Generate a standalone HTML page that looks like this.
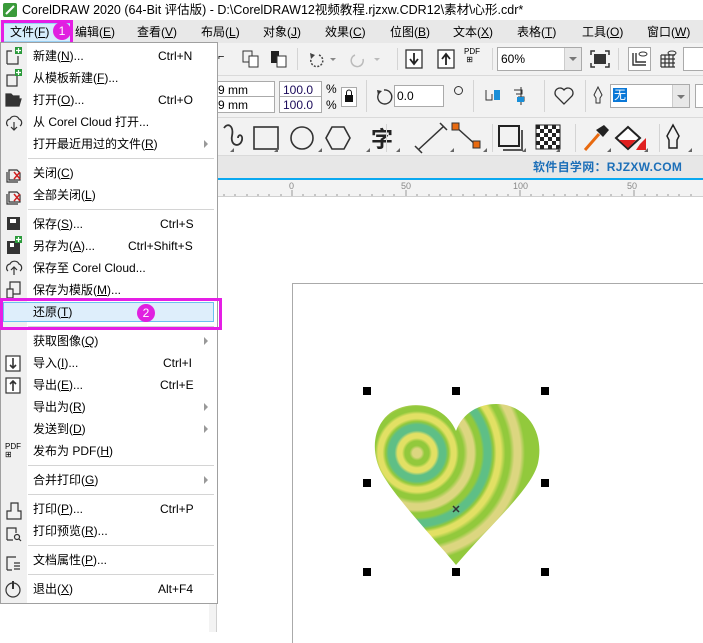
<!DOCTYPE html>
<html><head><meta charset="utf-8"><style>
*{margin:0;padding:0;box-sizing:border-box}
body{width:703px;height:632px;overflow:hidden;background:#fff;position:relative;font-family:"Liberation Sans","Noto Sans CJK SC",sans-serif;font-size:12px;color:#000}
.a{position:absolute}
.t{position:absolute;white-space:nowrap;font-size:12px;line-height:14px}
.mi{position:absolute;left:33px;font-size:12px;line-height:14px;white-space:nowrap}
.sc{position:absolute;font-size:12px;line-height:14px;white-space:nowrap}
.sep{position:absolute;left:28px;width:186px;height:1px;background:#d4d4d4}
.arr{position:absolute;left:204px;width:0;height:0;border-left:4px solid #999;border-top:4px solid transparent;border-bottom:4px solid transparent}
.box{position:absolute;background:#fff;border:1px solid #aaa;font-size:12px;line-height:14px;padding:1px 3px;color:#000}
.vd{position:absolute;width:1px;background:#d4d4d4}
</style></head><body>
<div class="a" style="left:0;top:0;width:703px;height:20px;background:#fff"></div>
<svg class="a" style="left:3px;top:3px" width="14" height="14"><rect width="14" height="14" rx="2" fill="#3a9a3a"/><path d="M3 11 L11 3" stroke="#fff" stroke-width="2"/></svg>
<div class="t" style="left:22px;top:3px;font-size:12.5px">CorelDRAW 2020 (64-Bit 评估版) - D:\CorelDRAW12视频教程.rjzxw.CDR12\素材\心形.cdr*</div>
<div class="a" style="left:0;top:20px;width:703px;height:23px;background:#e8e8e8"></div>
<div class="a" style="left:3px;top:23px;width:68px;height:19px;background:#d6ecfb;border:1px solid #99d1f5"></div>
<div class="t" style="left:10px;top:25px">文件(<u>F</u>)</div>
<div class="t" style="left:75px;top:25px">编辑(<u>E</u>)</div>
<div class="t" style="left:137px;top:25px">查看(<u>V</u>)</div>
<div class="t" style="left:201px;top:25px">布局(<u>L</u>)</div>
<div class="t" style="left:263px;top:25px">对象(<u>J</u>)</div>
<div class="t" style="left:325px;top:25px">效果(<u>C</u>)</div>
<div class="t" style="left:390px;top:25px">位图(<u>B</u>)</div>
<div class="t" style="left:453px;top:25px">文本(<u>X</u>)</div>
<div class="t" style="left:517px;top:25px">表格(<u>T</u>)</div>
<div class="t" style="left:582px;top:25px">工具(<u>O</u>)</div>
<div class="t" style="left:647px;top:25px">窗口(<u>W</u>)</div>
<div class="a" style="left:1px;top:20px;width:72px;height:25px;border:3px solid #e51ee5"></div>
<div class="a" style="left:53px;top:22px;width:18px;height:18px;border-radius:50%;background:#e020e0;color:#fff;font-size:12px;line-height:18px;text-align:center">1</div>

<div class="a" style="left:0;top:43px;width:703px;height:112px;background:#f2f2f2"></div>
<div class="a" style="left:0;top:75px;width:703px;height:1px;background:#dadada"></div>
<div class="a" style="left:0;top:117px;width:703px;height:1px;background:#dadada"></div>
<div class="a" style="left:0;top:155px;width:703px;height:1px;background:#dadada"></div>
<div class="t" style="left:218px;top:50px;font-size:11px">⌐</div>
<svg class="a" style="left:242px;top:50px" width="18" height="18"><rect x="1" y="1" width="9" height="11" fill="none" stroke="#333"/><rect x="7" y="6" width="9" height="11" fill="#fff" stroke="#333"/></svg>
<svg class="a" style="left:270px;top:50px" width="18" height="18"><rect x="1" y="1" width="8" height="12" fill="#222"/><rect x="7" y="6" width="9" height="11" fill="#fff" stroke="#333"/></svg>
<div class="vd" style="left:297px;top:48px;height:22px"></div>
<svg class="a" style="left:306px;top:50px" width="32" height="18"><path d="M13 5 A6 6 0 1 1 5 9" fill="none" stroke="#444" stroke-width="1.5" stroke-dasharray="2 1.5"/><path d="M4 3 L9 5 L5 9Z" fill="#444"/><path d="M24 8 L30 8 L27 11Z" fill="#888"/></svg>
<svg class="a" style="left:350px;top:50px" width="32" height="18"><path d="M5 5 A6 6 0 1 0 13 9" fill="none" stroke="#bbb" stroke-width="1.5"/><path d="M24 8 L30 8 L27 11Z" fill="#bbb"/></svg>
<div class="vd" style="left:397px;top:48px;height:22px"></div>
<svg class="a" style="left:404px;top:48px" width="70" height="22"><rect x="2" y="2" width="16" height="18" fill="#fff" stroke="#333" stroke-width="1.3"/><path d="M10 5 V15 M6 11 L10 16 L14 11" stroke="#222" stroke-width="1.8" fill="none"/><rect x="34" y="2" width="16" height="18" fill="#fff" stroke="#333" stroke-width="1.3"/><path d="M42 17 V7 M38 11 L42 6 L46 11" stroke="#222" stroke-width="1.8" fill="none"/></svg>
<div class="t" style="left:464px;top:48px;font-size:8px;line-height:8px">PDF<br>&nbsp;⊞</div>
<div class="vd" style="left:492px;top:48px;height:22px"></div>
<div class="box" style="left:497px;top:47px;width:85px;height:24px;padding:4px 3px">60%</div>
<div class="a" style="left:564px;top:48px;width:17px;height:22px;background:#e8e8e8;border-left:1px solid #ccc"></div>
<div class="a" style="left:569px;top:57px;border-left:4px solid transparent;border-right:4px solid transparent;border-top:4px solid #777"></div>
<svg class="a" style="left:590px;top:50px" width="20" height="18"><path d="M1 5V1H5 M15 1H19V5 M19 13V17H15 M5 17H1V13" stroke="#333" fill="none" stroke-width="1.5"/><rect x="4" y="4" width="12" height="10" fill="#333"/></svg>
<div class="vd" style="left:618px;top:48px;height:22px"></div>
<div class="a" style="left:628px;top:47px;width:23px;height:24px;border:1px solid #aaa;background:#fff"></div>
<svg class="a" style="left:630px;top:49px" width="20" height="20"><path d="M3 4V16H16 M6 4V13H16" stroke="#333" fill="none" stroke-width="1.4"/><ellipse cx="13" cy="5" rx="4" ry="2" fill="none" stroke="#333"/></svg>
<svg class="a" style="left:658px;top:49px" width="20" height="20"><path d="M3 6H17M3 10H17M3 14H17M3 18H17M3 6V18M7 6V18M11 6V18M15 6V18" stroke="#333" stroke-width="1.2"/><ellipse cx="14" cy="4" rx="4" ry="2" fill="none" stroke="#333"/></svg>
<div class="a" style="left:683px;top:47px;width:22px;height:24px;border:1px solid #aaa;background:#fff"></div>
<div class="box" style="left:214px;top:81px;width:61px;height:17px">9 mm</div>
<div class="box" style="left:214px;top:96px;width:61px;height:17px">9 mm</div>
<div class="box" style="left:279px;top:81px;width:43px;height:17px;color:#1a0a5a">100.0</div>
<div class="box" style="left:279px;top:96px;width:43px;height:17px;color:#1a0a5a">100.0</div>
<div class="t" style="left:326px;top:82px">%</div>
<div class="t" style="left:326px;top:98px">%</div>
<div class="a" style="left:341px;top:87px;width:16px;height:20px;border:1px solid #aaa;background:#fff"></div>
<svg class="a" style="left:344px;top:89px" width="10" height="14"><path d="M2.5 6V3.5A2.5 2.5 0 0 1 7.5 3.5V6" stroke="#111" fill="none"/><rect x="1" y="6" width="8" height="7" fill="#111"/></svg>
<div class="vd" style="left:366px;top:80px;height:32px"></div>
<svg class="a" style="left:374px;top:87px" width="20" height="20"><path d="M5 6 A7 7 0 1 0 10 3" fill="none" stroke="#333" stroke-width="1.4"/><path d="M3 3 L8 4 L4 8Z" fill="#333"/></svg>
<div class="box" style="left:394px;top:85px;width:50px;height:22px;padding:3px 2px">0.0</div>
<div class="a" style="left:454px;top:86px;width:9px;height:9px;border:1.2px solid #333;border-radius:50%"></div>
<div class="vd" style="left:473px;top:80px;height:32px"></div>
<svg class="a" style="left:484px;top:86px" width="60" height="20"><path d="M2 4V14H8V8" stroke="#333" fill="none"/><rect x="10" y="4" width="6" height="10" fill="#1a8fd8"/><path d="M37 1V19M30 4H38V8H32M34 11H40V15H33" stroke="#333" fill="none"/><rect x="33" y="11" width="7" height="5" fill="#1a8fd8"/></svg>
<div class="vd" style="left:544px;top:80px;height:32px"></div>
<svg class="a" style="left:553px;top:86px" width="22" height="20"><path d="M11 18 L3 10 A4.5 4.5 0 0 1 11 4 A4.5 4.5 0 0 1 19 10Z" fill="none" stroke="#333" stroke-width="1.3"/></svg>
<div class="vd" style="left:585px;top:80px;height:32px"></div>
<svg class="a" style="left:592px;top:86px" width="12" height="20"><path d="M6 1 L10 9 L8 12V17H4V12L2 9Z" fill="none" stroke="#333"/></svg>
<div class="box" style="left:610px;top:84px;width:80px;height:24px;padding:3px 2px"><span style="background:#0a78d7;color:#fff;padding:0 1px">无</span></div>
<div class="a" style="left:672px;top:85px;width:17px;height:22px;background:#e8e8e8;border-left:1px solid #ccc"></div>
<div class="a" style="left:677px;top:95px;border-left:4px solid transparent;border-right:4px solid transparent;border-top:4px solid #777"></div>
<div class="box" style="left:695px;top:84px;width:12px;height:24px"></div>
<svg class="a" style="left:218px;top:122px" width="480" height="32">
<path d="M6 6 C10 0 16 4 14 14 C12 24 22 26 24 18 C25 12 20 12 20 16" fill="none" stroke="#333" stroke-width="1.8"/>
<rect x="36" y="5" width="24" height="22" fill="none" stroke="#333" stroke-width="1.6"/>
<circle cx="84" cy="16" r="11" fill="none" stroke="#333" stroke-width="1.6"/>
<path d="M114 5 H126 L132 16 L126 27 H114 L108 16Z" fill="none" stroke="#333" stroke-width="1.6"/>
<text x="153" y="25" font-size="22" font-weight="bold" font-family="Noto Sans CJK SC" fill="#222">字</text>
<path d="M200 28 L226 4 M197 24 L204 31 M222 1 L229 8" stroke="#333" stroke-width="1.5"/>
<path d="M238 5 L258 23" stroke="#333" stroke-width="1.5"/><rect x="234" y="1" width="7" height="7" fill="#e86a10" stroke="#333"/><rect x="255" y="19" width="7" height="7" fill="#e86a10" stroke="#333"/>
<rect x="281" y="4" width="20" height="20" fill="none" stroke="#222" stroke-width="2"/><path d="M304 8V28H285" stroke="#555" stroke-width="2" fill="none"/>
<g fill="#222"><rect x="318" y="3" width="24" height="24" fill="#fff" stroke="#222"/>
<rect x="318" y="3" width="4" height="4"/><rect x="326" y="3" width="4" height="4"/><rect x="334" y="3" width="4" height="4"/><rect x="322" y="7" width="4" height="4"/><rect x="330" y="7" width="4" height="4"/><rect x="338" y="7" width="4" height="4"/><rect x="318" y="11" width="4" height="4"/><rect x="326" y="11" width="4" height="4"/><rect x="334" y="11" width="4" height="4"/><rect x="322" y="15" width="4" height="4"/><rect x="330" y="15" width="4" height="4"/><rect x="338" y="15" width="4" height="4"/><rect x="318" y="19" width="4" height="4"/><rect x="326" y="19" width="4" height="4"/><rect x="334" y="19" width="4" height="4"/><rect x="322" y="23" width="4" height="4"/><rect x="330" y="23" width="4" height="4"/><rect x="338" y="23" width="4" height="4"/></g>
<path d="M367 28 L381 12" stroke="#e86a10" stroke-width="3"/><path d="M378 8 L386 3 L391 8 L385 15Z" fill="#222"/>
<path d="M410 5 L422 16 L410 27 L398 16Z" fill="#fff" stroke="#222" stroke-width="2"/><path d="M401 18 L418 18 L410 26Z" fill="#e02020"/><path d="M422 22 L428 16 V28 H418Z" fill="#e02020"/>
<path d="M455 3 L461 14 L459 18 V26 H451 V18 L449 14Z" fill="none" stroke="#222" stroke-width="1.5"/>
<path d="M12 30 l4 0 0 -4z M56 30 l4 0 0-4z M100 30 l4 0 0-4z M148 30 l4 0 0-4z M178 30 l4 0 0-4z M232 30 l4 0 0-4z M265 30 l4 0 0-4z M304 30 l4 0 0-4z M338 30 l4 0 0-4z M389 30 l4 0 0-4z M426 30 l4 0 0-4z M470 30 l4 0 0-4z" fill="#666"/>
<path d="M168.5 2V30 M274.5 2V30 M357.5 2V30 M441.5 2V30" stroke="#d4d4d4"/>
</svg>
<div class="a" style="left:0;top:156px;width:703px;height:22px;background:#e7e7e7"></div>
<div class="t" style="left:533px;top:160px;font-size:12px;font-weight:bold;color:#1c6fb8;letter-spacing:0.3px">软件自学网：RJZXW.COM</div>
<div class="a" style="left:0;top:178px;width:703px;height:2px;background:#0aa8f0"></div>
<div class="a" style="left:0;top:180px;width:703px;height:17px;background:#f3f3f3;border-bottom:1px solid #d0d0d0"></div>
<svg class="a" style="left:218px;top:180px" width="485" height="17">
<g fill="#888" font-size="9" font-family="Liberation Sans"><text x="71" y="9">0</text><text x="183" y="9">50</text><text x="295" y="9">100</text><text x="409" y="9">50</text></g>
<path d="M74 10V16 M188 10V16 M302 10V16 M416 10V16" stroke="#999"/>
<path d="M6 14V16M17 14V16M29 14V16M40 14V16M51 14V16M63 14V16M85 14V16M97 14V16M108 14V16M119 14V16M131 14V16M142 14V16M154 14V16M165 14V16M176 14V16M199 14V16M211 14V16M222 14V16M233 14V16M245 14V16M256 14V16M268 14V16M279 14V16M290 14V16M313 14V16M325 14V16M336 14V16M347 14V16M359 14V16M370 14V16M382 14V16M393 14V16M404 14V16M427 14V16M439 14V16M450 14V16M461 14V16M473 14V16" stroke="#999"/>
</svg>
<div class="a" style="left:209px;top:197px;width:8px;height:435px;background:#f3f3f3;border-right:1px solid #d0d0d0"></div>
<div class="a" style="left:292px;top:283px;width:420px;height:360px;border-left:1px solid #aaa;border-top:1px solid #aaa"></div>
<svg class="a" style="left:360px;top:385px" width="195" height="195">
<defs>
<radialGradient id="rg" gradientUnits="userSpaceOnUse" cx="57" cy="68" r="150">
<stop offset="0" stop-color="#dcd680"/><stop offset="0.03" stop-color="#dcd680"/>
<stop offset="0.05" stop-color="#92c93c"/><stop offset="0.08" stop-color="#92c93c"/>
<stop offset="0.1" stop-color="#e2e064"/><stop offset="0.13" stop-color="#e2e064"/>
<stop offset="0.15" stop-color="#5ebf86"/><stop offset="0.19" stop-color="#5ebf86"/>
<stop offset="0.21" stop-color="#92c93c"/><stop offset="0.23" stop-color="#e2e064"/><stop offset="0.26" stop-color="#e2e064"/>
<stop offset="0.28" stop-color="#92c93c"/><stop offset="0.31" stop-color="#92c93c"/>
<stop offset="0.34" stop-color="#dcd680"/><stop offset="0.38" stop-color="#dcd680"/>
<stop offset="0.4" stop-color="#92c93c"/><stop offset="0.43" stop-color="#92c93c"/>
<stop offset="0.45" stop-color="#5ebf86"/><stop offset="0.49" stop-color="#5ebf86"/>
<stop offset="0.51" stop-color="#92c93c"/><stop offset="0.53" stop-color="#e2e064"/><stop offset="0.56" stop-color="#e2e064"/>
<stop offset="0.59" stop-color="#92c93c"/><stop offset="0.62" stop-color="#92c93c"/>
<stop offset="0.65" stop-color="#dcd680"/><stop offset="0.69" stop-color="#dcd680"/>
<stop offset="0.72" stop-color="#92c93c"/><stop offset="1" stop-color="#92c93c"/>
</radialGradient></defs>
<path d="M96 180 C80 160 40 118 24 92 C10 70 12 42 30 28 C50 14 84 18 96 46 C104 24 126 16 146 20 C170 26 184 50 178 78 C172 104 130 140 96 180Z" fill="url(#rg)"/>
<path d="M93 121 L99 127 M99 121 L93 127" stroke="#333" stroke-width="1.5"/>
</svg>
<div class="a" style="left:363px;top:387px;width:8px;height:8px;background:#000"></div>
<div class="a" style="left:452px;top:387px;width:8px;height:8px;background:#000"></div>
<div class="a" style="left:541px;top:387px;width:8px;height:8px;background:#000"></div>
<div class="a" style="left:363px;top:479px;width:8px;height:8px;background:#000"></div>
<div class="a" style="left:541px;top:479px;width:8px;height:8px;background:#000"></div>
<div class="a" style="left:363px;top:568px;width:8px;height:8px;background:#000"></div>
<div class="a" style="left:452px;top:568px;width:8px;height:8px;background:#000"></div>
<div class="a" style="left:541px;top:568px;width:8px;height:8px;background:#000"></div>

<div class="a" style="left:0;top:42px;width:218px;height:562px;background:#fff;border:1px solid #a0a0a0"></div>
<div class="a" style="left:1px;top:43px;width:26px;height:560px;background:#f0f0f0"></div>
<svg class="a" style="left:4px;top:46px" width="22" height="560" fill="none" stroke="#333" stroke-width="1.2">
<path d="M3 18V5H8 M3 18H14V10"/><rect x="11" y="1" width="7" height="7" fill="#2a9a3a" stroke="none"/><path d="M14.5 2V7M12 4.5H17" stroke="#fff"/>
<rect x="3" y="29" width="10" height="11" /><rect x="11" y="23" width="7" height="7" fill="#2a9a3a" stroke="none"/><path d="M14.5 24V29M12 26.5H17" stroke="#fff"/>
<path d="M2 60V48H7L9 50H15V60Z M4 60L6 53H17L15 60" fill="#333"/>
<path d="M4 80A4 4 0 0 1 6 73A5 5 0 0 1 15 73A4 4 0 0 1 16 80 M10 76V84M7 81L10 84L13 81"/>
<path d="M5 134V124H13L16 127V134Z M3 126V136H14" /><path d="M10 126L16 133M16 126L10 133" stroke="#d02020" stroke-width="1.5"/>
<path d="M5 156V146H13L16 149V156Z M3 148V158H14"/><path d="M10 148L16 155M16 148L10 155" stroke="#d02020" stroke-width="1.5"/>
<rect x="3" y="171" width="13" height="13" fill="#333" stroke="none"/><rect x="6" y="173" width="6" height="4" fill="#fff" stroke="none"/>
<rect x="3" y="195" width="13" height="13" fill="#333" stroke="none"/><rect x="6" y="197" width="4" height="4" fill="#fff" stroke="none"/><rect x="11" y="190" width="7" height="7" fill="#2a9a3a" stroke="none"/><path d="M14.5 191V196M12 193.5H17" stroke="#fff"/>
<path d="M4 225A4 4 0 0 1 6 218A5 5 0 0 1 15 218A4 4 0 0 1 16 225 M10 229V221M7 224L10 221L13 224"/>
<path d="M3 252V243H9V252Z M6 243V236H16V248H9"/>
<rect x="3" y="268" width="8" height="7" fill="#333" stroke="none"/><path d="M12 263A3 3 0 1 1 15 266" stroke="#e03030"/>
<rect x="2" y="310" width="14" height="15" fill="#fff"/><path d="M9 312V322M6 319L9 322L12 319" stroke-width="1.6"/>
<rect x="2" y="332" width="14" height="15" fill="#fff"/><path d="M9 345V335M6 338L9 335L12 338" stroke-width="1.6"/>
<path d="M3 473H17V465H14V457H7V465H3Z"/>
<path d="M3 494V482H12V487 M3 494H9"/><circle cx="13" cy="491" r="2.5"/><path d="M15 493L17 495"/>
<path d="M3 524V511H12 M3 524H8 M10 517H16M10 520H16M10 523H16"/>
<circle cx="9" cy="544" r="7"/><path d="M9 535V543" stroke="#333" stroke-width="2"/>
</svg>
<div class="t" style="left:5px;top:443px;font-size:8px;line-height:8px">PDF<br>⊞</div>

<div class="mi" style="top:49px">新建(<u>N</u>)...</div><div class="sc" style="left:158px;top:49px">Ctrl+N</div>
<div class="mi" style="top:71px">从模板新建(<u>F</u>)...</div>
<div class="mi" style="top:93px">打开(<u>O</u>)...</div><div class="sc" style="left:158px;top:93px">Ctrl+O</div>
<div class="mi" style="top:115px">从 Corel Cloud 打开...</div>
<div class="mi" style="top:137px">打开最近用过的文件(<u>R</u>)</div><div class="arr" style="top:140px"></div>
<div class="sep" style="top:158px"></div>
<div class="mi" style="top:166px">关闭(<u>C</u>)</div>
<div class="mi" style="top:188px">全部关闭(<u>L</u>)</div>
<div class="sep" style="top:209px"></div>
<div class="mi" style="top:217px">保存(<u>S</u>)...</div><div class="sc" style="left:160px;top:217px">Ctrl+S</div>
<div class="mi" style="top:239px">另存为(<u>A</u>)...</div><div class="sc" style="left:128px;top:239px">Ctrl+Shift+S</div>
<div class="mi" style="top:261px">保存至 Corel Cloud...</div>
<div class="mi" style="top:283px">保存为模版(<u>M</u>)...</div>
<div class="a" style="left:3px;top:302px;width:211px;height:20px;background:#deeefb;border:1px solid #6cc0f0"></div>
<div class="mi" style="top:305px">还原(<u>T</u>)</div>
<div class="a" style="left:0;top:298px;width:222px;height:32px;border:3px solid #e51ee5"></div>
<div class="a" style="left:137px;top:304px;width:18px;height:18px;border-radius:50%;background:#e020e0;color:#fff;font-size:12px;line-height:18px;text-align:center">2</div>
<div class="sep" style="top:326px"></div>
<div class="mi" style="top:334px">获取图像(<u>Q</u>)</div><div class="arr" style="top:337px"></div>
<div class="mi" style="top:356px">导入(<u>I</u>)...</div><div class="sc" style="left:163px;top:356px">Ctrl+I</div>
<div class="mi" style="top:378px">导出(<u>E</u>)...</div><div class="sc" style="left:160px;top:378px">Ctrl+E</div>
<div class="mi" style="top:400px">导出为(<u>R</u>)</div><div class="arr" style="top:403px"></div>
<div class="mi" style="top:422px">发送到(<u>D</u>)</div><div class="arr" style="top:425px"></div>
<div class="mi" style="top:444px">发布为 PDF(<u>H</u>)</div>
<div class="sep" style="top:465px"></div>
<div class="mi" style="top:473px">合并打印(<u>G</u>)</div><div class="arr" style="top:476px"></div>
<div class="sep" style="top:494px"></div>
<div class="mi" style="top:502px">打印(<u>P</u>)...</div><div class="sc" style="left:160px;top:502px">Ctrl+P</div>
<div class="mi" style="top:524px">打印预览(<u>R</u>)...</div>
<div class="sep" style="top:545px"></div>
<div class="mi" style="top:553px">文档属性(<u>P</u>)...</div>
<div class="sep" style="top:574px"></div>
<div class="mi" style="top:582px">退出(<u>X</u>)</div><div class="sc" style="left:158px;top:582px">Alt+F4</div>
</body></html>
